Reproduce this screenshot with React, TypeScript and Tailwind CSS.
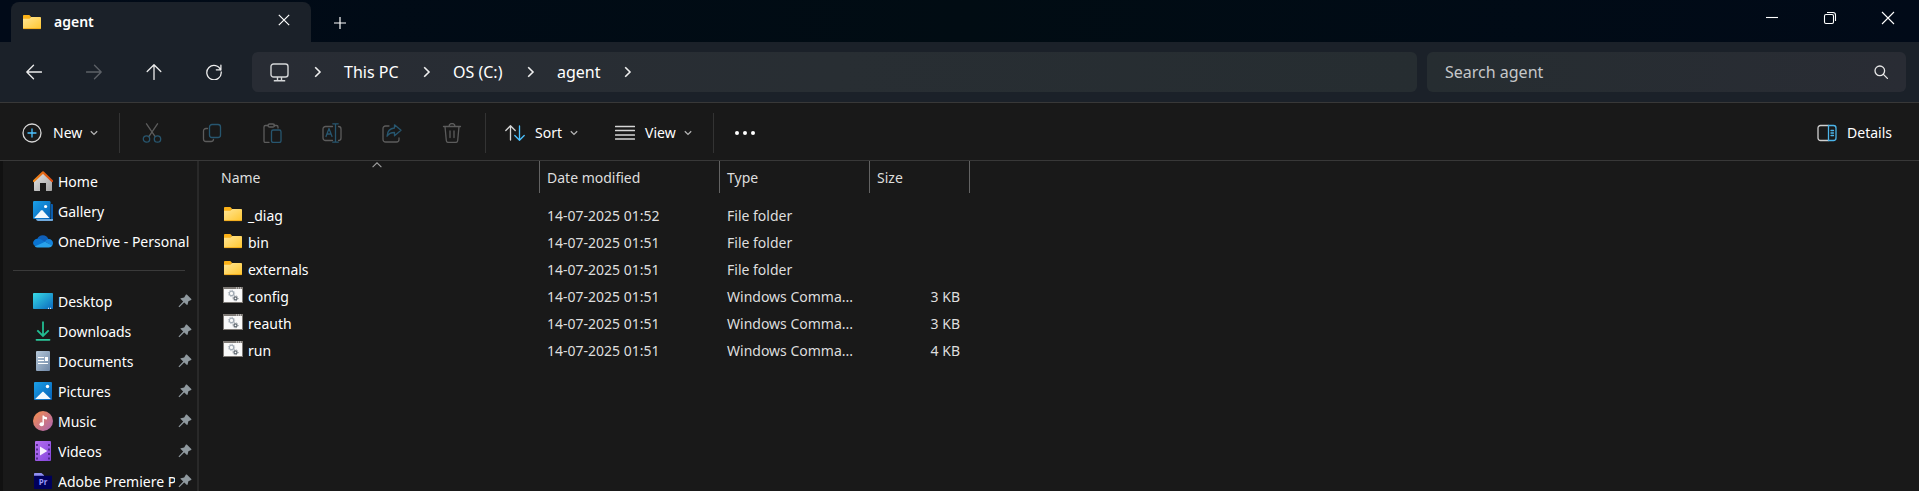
import type { ReactNode } from "react";

type IconProps = { children: ReactNode; size?: number; className?: string };

function Icon({ children, size = 20, className = "" }: IconProps) {
  return (
    <svg
      width={size}
      height={size}
      viewBox="0 0 20 20"
      fill="none"
      stroke="currentColor"
      strokeWidth="1.3"
      strokeLinecap="round"
      strokeLinejoin="round"
      aria-hidden="true"
      className={"shrink-0 " + className}
    >
      {children}
    </svg>
  );
}

function Chevron({ direction }: { direction: "down" | "right" }) {
  return direction === "down" ? (
    <svg width="8" height="6" viewBox="0 0 8 6" fill="none" stroke="#b4b4b4" strokeWidth="1.3" aria-hidden="true">
      <path d="M.8 1.2 4 4.4l3.2-3.2" />
    </svg>
  ) : (
    <svg width="8" height="12" viewBox="0 0 8 12" fill="none" stroke="#f0f0f0" strokeWidth="1.6" aria-hidden="true">
      <path d="M1.2 1.2 6 6l-4.8 4.8" />
    </svg>
  );
}

function FolderIcon() {
  return (
    <svg width="20" height="20" viewBox="0 0 20 20" aria-hidden="true" className="shrink-0">
      <defs>
        <linearGradient id="folder-front" x1="0" y1="0" x2="1" y2="1">
          <stop offset="0" stopColor="#ffe696" />
          <stop offset="1" stopColor="#ffc62f" />
        </linearGradient>
      </defs>
      <path d="M1 3.8c0-.5.3-.8.8-.8h5c.4 0 .7.1 1 .4l1.4 1.5L7.700 7H1z" fill="#fbb117" />
      <path d="M1 6.800h6.300L9.200 5H18.200c.5 0 .8.300.8.800v10.400c0 .5-.3.800-.8.800H1.800c-.5 0-.8-.3-.8-.8z" fill="url(#folder-front)" />
      <path d="M1.300 16.600h17.400" stroke="#f0a818" strokeWidth="0.900" />
    </svg>
  );
}

function Gear({ cx, cy, r, color }: { cx: number; cy: number; r: number; color: string }) {
  return (
    <g stroke={color} fill="none">
      <circle cx={cx} cy={cy} r={r + 1} strokeWidth="0.900" strokeDasharray="1.1 1.4" />
      <circle cx={cx} cy={cy} r={r} strokeWidth="1.200" />
    </g>
  );
}

function ScriptIcon() {
  return (
    <svg width="20" height="20" viewBox="0 0 20 20" aria-hidden="true" className="shrink-0">
      <rect x="0" y="2" width="20" height="16" fill="#7d7975" />
      <rect x="1" y="4" width="18" height="13" fill="#f9f9f9" />
      <path d="M13 3h1M15 3h1M17 3h1" stroke="#e4e4e4" strokeWidth="1" />
      <Gear cx={8.500} cy={8.400} r={2.200} color="#a3acb5" />
      <Gear cx={12.500} cy={13.300} r={1.500} color="#5d666e" />
    </svg>
  );
}

function HomeIcon() {
  return (
    <svg width="20" height="20" viewBox="0 0 20 20" aria-hidden="true" className="shrink-0">
      <defs>
        <linearGradient id="home-wall" x1="0" y1="0" x2="1" y2="1">
          <stop offset="0" stopColor="#e6e6e6" />
          <stop offset="1" stopColor="#a2a2a2" />
        </linearGradient>
        <linearGradient id="home-roof" x1="0" y1="0" x2="1" y2="0">
          <stop offset="0" stopColor="#f08a1c" />
          <stop offset="1" stopColor="#d9480f" />
        </linearGradient>
      </defs>
      <path d="M1 9.500 10 1.500l9 8V19c0 .6-.4 1-1 1h-5v-8H7v8H2c-.6 0-1-.4-1-1z" fill="url(#home-wall)" />
      <path d="M.9 10 10 1.400 19.100 10" fill="none" stroke="url(#home-roof)" strokeWidth="2.200" strokeLinecap="round" strokeLinejoin="round" />
    </svg>
  );
}

function SkyGradient({ id }: { id: string }) {
  return (
    <linearGradient id={id} x1="0" y1="0" x2="1" y2="1">
      <stop offset="0" stopColor="#1ba0e8" />
      <stop offset="1" stopColor="#0560b6" />
    </linearGradient>
  );
}

function GalleryIcon() {
  return (
    <svg width="20" height="20" viewBox="0 0 20 20" aria-hidden="true" className="shrink-0">
      <defs>
        <SkyGradient id="gallery-sky" />
      </defs>
      <path d="M18 3h1.200c.5 0 .8.300.8.800V18h-2z" fill="#0a5cad" />
      <path d="M3 18h17v1c0 .6-.4 1-1 1H5c-1 0-1.700-.7-2-2z" fill="#6fa9dd" />
      <rect x="0" y="0" width="17.500" height="18" rx="1.200" fill="url(#gallery-sky)" />
      <path d="M1.200 17 8 9.600c.5-.5 1.200-.5 1.700 0L16.500 17z" fill="#f2f8fd" />
      <circle cx="12.600" cy="5.500" r="1.600" fill="#fff" />
    </svg>
  );
}

function OneDriveIcon() {
  return (
    <svg width="20" height="20" viewBox="0 0 20 20" aria-hidden="true" className="shrink-0">
      <path d="M4.300 7.900A6 6 0 0 1 15.400 8l-3 4-8 3z" fill="#0f5fb8" />
      <path d="M4.700 7.800c1.300-.1 2.400.2 3.400.8L14 12 3 15.700A4.300 4.300 0 0 1 0 12a4.400 4.400 0 0 1 4.700-4.200z" fill="#0a74d1" />
      <path d="M12 10.800c1-1.900 2.300-2.800 3.600-2.800A4.200 4.200 0 0 1 20 12.300c0 1-.3 1.800-.9 2.500z" fill="#1583dc" />
      <path d="M1.700 15.400 12 10.800l7.300 3.700c-.7 1.300-1.900 2-3.400 2H4.500c-1 0-2-.4-2.800-1.100z" fill="#28a2ec" />
    </svg>
  );
}

function DesktopIcon() {
  return (
    <svg width="20" height="20" viewBox="0 0 20 20" aria-hidden="true" className="shrink-0">
      <defs>
        <linearGradient id="desktop-fill" x1="0" y1="0" x2="1" y2="1">
          <stop offset="0" stopColor="#38dbe6" />
          <stop offset="1" stopColor="#0a67bd" />
        </linearGradient>
      </defs>
      <rect x="0" y="2" width="20" height="16" rx="0.800" fill="url(#desktop-fill)" />
      <path d="M15 17.300h1M17 17.300h1" stroke="#fff" strokeWidth="1" />
    </svg>
  );
}

function DownloadsIcon() {
  return (
    <svg width="20" height="20" viewBox="0 0 20 20" fill="none" aria-hidden="true" className="shrink-0">
      <path d="M10 .5v14M4.300 9.300l5.700 5.700 5.700-5.700" stroke="#22bd92" strokeWidth="1.800" />
      <path d="M3.500 18.800h13" stroke="#2bc79b" strokeWidth="1.800" strokeLinecap="round" />
    </svg>
  );
}

function DocumentsIcon() {
  return (
    <svg width="20" height="20" viewBox="0 0 20 20" aria-hidden="true" className="shrink-0">
      <defs>
        <linearGradient id="document-fill" x1="0" y1="0" x2="1" y2="1">
          <stop offset="0" stopColor="#b5c8d9" />
          <stop offset="1" stopColor="#6f87a6" />
        </linearGradient>
      </defs>
      <rect x="3" y="0" width="14" height="20" rx="1" fill="url(#document-fill)" />
      <path d="M5 6.500h6M5 9.500h6M5 12.500h10" stroke="#fff" strokeWidth="1.200" />
      <rect x="12" y="6" width="3" height="4" fill="#fff" />
    </svg>
  );
}

function PicturesIcon() {
  return (
    <svg width="20" height="20" viewBox="0 0 20 20" aria-hidden="true" className="shrink-0">
      <defs>
        <SkyGradient id="picture-sky" />
      </defs>
      <rect x="1" y="1" width="18" height="18" rx="1" fill="url(#picture-sky)" />
      <path d="M2.200 18 9 11.200c.6-.5 1.300-.5 1.900 0l6.900 6.800z" fill="#f2f8fd" />
      <circle cx="14.500" cy="5.500" r="1.700" fill="#fff" />
    </svg>
  );
}

function MusicIcon() {
  return (
    <svg width="20" height="20" viewBox="0 0 20 20" aria-hidden="true" className="shrink-0">
      <defs>
        <linearGradient id="music-fill" x1="0" y1="0" x2="1" y2="1">
          <stop offset="0.100" stopColor="#f08b54" />
          <stop offset="1" stopColor="#a862b4" />
        </linearGradient>
      </defs>
      <circle cx="10" cy="10" r="10" fill="url(#music-fill)" />
      <ellipse cx="8.700" cy="13.300" rx="2.200" ry="2" fill="#fff" />
      <path d="M9.500 4.500h1.300c.5 1.400 1.600 1.500 3.200 1.700v2.300c-1.300 0-2.300-.2-3.100-.8v5.600H9.500z" fill="#fff" />
    </svg>
  );
}

function VideosIcon() {
  return (
    <svg width="20" height="20" viewBox="0 0 20 20" aria-hidden="true" className="shrink-0">
      <defs>
        <linearGradient id="video-fill" x1="0" y1="0" x2="1" y2="1">
          <stop offset="0" stopColor="#b56ff0" />
          <stop offset="1" stopColor="#8446dc" />
        </linearGradient>
      </defs>
      <rect x="2" y="0" width="16" height="20" rx="1" fill="url(#video-fill)" />
      <path d="M4 3v16M16 3v16" stroke="#44217d" strokeWidth="1.600" strokeDasharray="2 2.500" />
      <path d="M7 5.500v9l7.300-4.500z" fill="#f7f1fd" />
    </svg>
  );
}

function PremiereIcon() {
  return (
    <svg width="20" height="20" viewBox="0 0 20 20" aria-hidden="true" className="shrink-0">
      <path d="M1 5V2.800c0-.5.300-.8.800-.8h6.700L11 4.200V5z" fill="#8f8ff0" />
      <path d="M1 4.800h18V17c0 .6-.4 1-1 1H2c-.6 0-1-.4-1-1z" fill="#00005b" />
      <text x="10" y="14" textAnchor="middle" fontFamily="Open Sans, sans-serif" fontWeight="700" fontSize="8" fill="#9a9aff">
        Pr
      </text>
    </svg>
  );
}

function PinIcon() {
  return (
    <svg width="14" height="14" viewBox="0 0 14 14" fill="#8f999f" aria-hidden="true" className="shrink-0">
      <path d="M8.800.6 13.300 5c.3.300.2.700-.2.900l-2.700 1.300-.8 3.300c-.1.500-.5.600-.9.300L6.200 8.500 1.300 13.200l-.8-.7 4.700-4.900L2.600 5.100c-.4-.4-.2-.8.300-.9l3.300-.7L7.800.8c.2-.4.700-.5 1-.2z" />
    </svg>
  );
}

function Caption({ label, children }: { label: string; children: ReactNode }) {
  return (
    <button type="button" aria-label={label} className="flex h-9 w-[58px] items-center justify-center text-white">
      <svg width="14" height="14" viewBox="0 0 14 14" fill="none" stroke="currentColor" strokeWidth="1.100" aria-hidden="true">
        {children}
      </svg>
    </button>
  );
}

function TitleBar() {
  return (
    <header className="flex h-[42px] shrink-0 justify-between bg-linear-to-r from-[#010a18] via-[#010c13] to-[#010a18]">
      <div className="flex items-end pl-[11px]">
        <div className="flex h-10 w-[300px] items-center rounded-t-lg bg-[#1b2129] pr-4 pl-[11px]">
          <FolderIcon />
          <span className="flex-1 pl-3 text-sm font-semibold text-white">agent</span>
          <button type="button" aria-label="Close tab" className="flex h-[38px] w-[22px] items-center justify-center pb-1 text-white">
            <svg width="12" height="12" viewBox="0 0 12 12" stroke="currentColor" strokeWidth="1.200" aria-hidden="true">
              <path d="m.8.8 10.400 10.400M11.200.8.800 11.200" />
            </svg>
          </button>
        </div>
        <button type="button" aria-label="New tab" className="flex h-[38px] w-[58px] items-center justify-center text-white">
          <svg width="12" height="12" viewBox="0 0 12 12" stroke="currentColor" strokeWidth="1.200" aria-hidden="true">
            <path d="M0 6h12M6 0v12" />
          </svg>
        </button>
      </div>
      <div className="flex pr-[2px]">
        <Caption label="Minimize">
          <path d="M1 6.500h12" />
        </Caption>
        <Caption label="Restore">
          <rect x="1.500" y="3.500" width="9" height="9" rx="1.500" />
          <path d="M4 1.500h6A2.500 2.500 0 0 1 12.500 4v6" />
        </Caption>
        <Caption label="Close">
          <path d="m1 1 12 12M13 1 1 13" />
        </Caption>
      </div>
    </header>
  );
}

function NavButton({ label, disabled, children }: { label: string; disabled?: boolean; children: ReactNode }) {
  return (
    <button
      type="button"
      aria-label={label}
      disabled={disabled}
      className="flex h-10 w-[60px] items-center justify-center text-[#ededed] disabled:text-[#5d6167]"
    >
      <svg width="16" height="16" viewBox="0 0 16 16" fill="none" stroke="currentColor" strokeWidth="1.300" strokeLinecap="round" strokeLinejoin="round" aria-hidden="true">
        {children}
      </svg>
    </button>
  );
}

function AddressBar() {
  return (
    <div className="flex h-[60px] shrink-0 items-center bg-[#1b2129] pr-[13px] pl-1">
      <div className="flex w-[248px]">
        <NavButton label="Back">
          <path d="M15.500 8H.8M7.500 1.200.8 8l6.700 6.800" />
        </NavButton>
        <NavButton label="Forward" disabled>
          <path d="M.5 8h14.700M8.500 1.200 15.200 8l-6.700 6.800" />
        </NavButton>
        <NavButton label="Up">
          <path d="M8 15.500V.8M1.200 7.500 8 .8l6.800 6.700" />
        </NavButton>
        <NavButton label="Refresh">
          <path d="M14.800 6.200A7.200 7.200 0 1 0 15.200 8M14.900 1.200v4.600h-4.600" />
        </NavButton>
      </div>
      <nav aria-label="Address" className="flex h-10 flex-1 items-center rounded-md bg-linear-to-r from-[#282c34] via-[#282e33] to-[#262d31] pl-[18px] text-base text-white">
        <button type="button" aria-label="Locations" className="flex w-11">
          <svg width="19" height="19" viewBox="0 0 19 19" fill="none" stroke="#d4d6d8" strokeWidth="1.400" aria-hidden="true">
            <rect x="1" y="1" width="17" height="13" rx="2.500" />
            <path d="M7.500 14v3M11.500 14v3M3.800 17.800h11.400" />
          </svg>
        </button>
        <Chevron direction="right" />
        <a href="#this-pc" className="w-[78px] pl-[22px] whitespace-nowrap">This PC</a>
        <span className="flex w-[31px] justify-end"><Chevron direction="right" /></span>
        <a href="#c" className="w-[74px] pl-[22px] whitespace-nowrap">OS (C:)</a>
        <span className="flex w-[30px] justify-end"><Chevron direction="right" /></span>
        <a href="#agent" className="w-[67px] pl-[22px] whitespace-nowrap">agent</a>
        <span className="flex w-[30px] justify-end"><Chevron direction="right" /></span>
      </nav>
      <label className="ml-[10px] flex h-10 w-[479px] items-center rounded-md bg-linear-to-r from-[#262d31] to-[#292c34] pr-[18px] pl-[18px]">
        <input
          type="text"
          aria-label="Search agent"
          placeholder="Search agent"
          className="min-w-0 flex-1 bg-transparent text-base text-white outline-none placeholder:text-[#c5c7c9]"
        />
        <svg width="14" height="14" viewBox="0 0 14 14" fill="none" stroke="#e8e8e8" strokeWidth="1.300" strokeLinecap="round" aria-hidden="true">
          <circle cx="5.800" cy="5.800" r="4.800" />
          <path d="m9.400 9.400 4 4" />
        </svg>
      </label>
    </div>
  );
}

function ToolIcon({ label, children }: { label: string; children: ReactNode }) {
  return (
    <button type="button" disabled aria-label={label} className="flex h-10 w-[60px] items-center justify-center text-[#5c5c5c]">
      <Icon>{children}</Icon>
    </button>
  );
}

function Toolbar() {
  return (
    <div role="toolbar" aria-label="Commands" className="flex h-[59px] shrink-0 items-center border-y border-[#383838] bg-[#191919] pt-[3px] text-sm text-white">
      <button type="button" className="flex h-10 w-[119px] items-center pl-[22px]">
        <Icon className="text-[#d6d6d6]">
          <circle cx="10" cy="10" r="9" />
          <path d="M10 6v8M6 10h8" stroke="#4cc2ff" />
        </Icon>
        <span className="w-12 pl-[11px] text-left">New</span>
        <Chevron direction="down" />
      </button>
      <div className="flex h-10 border-x border-[#333] pr-[3px] pl-[2px]">
        <ToolIcon label="Cut">
          <path d="M4.500.800 13 13.300M15.500.800 7 13.300" />
          <circle cx="4.500" cy="16" r="3.200" stroke="#27566f" />
          <circle cx="15.500" cy="16" r="3.200" stroke="#27566f" />
        </ToolIcon>
        <ToolIcon label="Copy">
          <path d="M5.500 5.500H4A2.500 2.500 0 0 0 1.500 8v8A2.500 2.500 0 0 0 4 18.500h5a2.500 2.500 0 0 0 2.500-2.200" />
          <rect x="7.500" y="1.500" width="11" height="13" rx="2.500" stroke="#27566f" />
        </ToolIcon>
        <ToolIcon label="Paste">
          <path d="M6 2.500H3.500A1.500 1.500 0 0 0 2 4v14a1.500 1.500 0 0 0 1.500 1.500H7M12 2.500h2.500A1.500 1.500 0 0 1 16 4v1" />
          <rect x="6" y="1" width="6.500" height="3" rx="1.500" />
          <rect x="9.500" y="7" width="9.500" height="12.500" rx="1.800" stroke="#27566f" />
        </ToolIcon>
        <ToolIcon label="Rename">
          <path d="M10.500 3.500H3.500A2.500 2.500 0 0 0 1 6v9a2.500 2.500 0 0 0 2.500 2.500h7M16.500 3.500A2.500 2.500 0 0 1 19 6v9a2.500 2.500 0 0 1-2.500 2.500" />
          <path d="M10.800.8h5.400M10.800 19.200h5.400M13.500.8v18.400M4 13.500l3-8 3 8M5 11h4" stroke="#27566f" />
        </ToolIcon>
        <ToolIcon label="Share">
          <path d="M7 3H3.500A2.500 2.500 0 0 0 1 5.500v11A2.500 2.500 0 0 0 3.500 19h11a2.500 2.500 0 0 0 2.500-2.500V15" />
          <path d="M12.500 1.800 19 7.300l-6.500 5.500V9.500c-3.500 0-5.800 1-7.500 3.700.3-5 3-7.800 7.500-8.200z" stroke="#27566f" />
        </ToolIcon>
        <ToolIcon label="Delete">
          <path d="M1.500 3.500h17M7 3.500a3 3 0 0 1 6 0M3 3.500l1.300 14A2 2 0 0 0 6.300 19.400h7.400a2 2 0 0 0 2-1.900L17 3.500M8 8v6.500M12 8v6.500" />
        </ToolIcon>
      </div>
      <div className="flex h-10 items-center border-r border-[#333]">
        <button type="button" className="flex h-10 w-[110px] items-center pl-[19px]">
          <Icon className="text-[#d6d6d6]">
            <path d="M5.500 17V3M.8 7.500 5.500 2.700l4.700 4.800" />
            <path d="M14.500 3v14M9.800 12.500l4.700 4.800 4.700-4.800" stroke="#4cc2ff" />
          </Icon>
          <span className="w-[45px] pl-[10px] text-left">Sort</span>
          <Chevron direction="down" />
        </button>
        <button type="button" className="flex h-10 w-[117px] items-center pl-[19px]">
          <Icon className="text-[#d6d6d6]">
            <path d="M.5 3.500h19M.5 7.500h19M.5 12h19M.5 16h19" />
          </Icon>
          <span className="w-[49px] pl-[10px] text-left">View</span>
          <Chevron direction="down" />
        </button>
      </div>
      <button type="button" aria-label="See more" className="flex h-10 w-[62px] items-center justify-center">
        <svg width="22" height="4" viewBox="0 0 22 4" fill="#fff" aria-hidden="true">
          <circle cx="3" cy="2" r="2" />
          <circle cx="11" cy="2" r="2" />
          <circle cx="19" cy="2" r="2" />
        </svg>
      </button>
      <button type="button" className="mr-[27px] ml-auto flex h-10 items-center gap-[10px]">
        <Icon className="text-[#cfcfcf]">
          <path d="M11.500 2.500H3.500A2.500 2.500 0 0 0 1 5v10a2.500 2.500 0 0 0 2.500 2.500h8" />
          <path d="M11.500 2.500h5A2.500 2.500 0 0 1 19 5v10a2.500 2.500 0 0 1-2.500 2.500h-5zM14 7.500h2.500M14 10h2.500M14 12.500h2.500" stroke="#4cb5ea" />
        </Icon>
        Details
      </button>
    </div>
  );
}

type Place = { name: string; icon: ReactNode; pinned?: boolean };

const topPlaces: Place[] = [
  { name: "Home", icon: <HomeIcon /> },
  { name: "Gallery", icon: <GalleryIcon /> },
  { name: "OneDrive - Personal", icon: <OneDriveIcon /> },
];

const pinnedPlaces: Place[] = [
  { name: "Desktop", icon: <DesktopIcon />, pinned: true },
  { name: "Downloads", icon: <DownloadsIcon />, pinned: true },
  { name: "Documents", icon: <DocumentsIcon />, pinned: true },
  { name: "Pictures", icon: <PicturesIcon />, pinned: true },
  { name: "Music", icon: <MusicIcon />, pinned: true },
  { name: "Videos", icon: <VideosIcon />, pinned: true },
  { name: "Adobe Premiere Pro", icon: <PremiereIcon />, pinned: true },
];

function PlaceList({ places }: { places: Place[] }) {
  return (
    <ul>
      {places.map((place) => (
        <li key={place.name}>
          <a href={"#" + place.name} className="flex h-[30px] items-center pr-[5px] pl-[30px]">
            {place.icon}
            <span className="ml-[5px] min-w-0 flex-1 overflow-hidden pt-px whitespace-nowrap">{place.name}</span>
            {place.pinned && (
              <span className="ml-[3px] flex">
                <PinIcon />
              </span>
            )}
          </a>
        </li>
      ))}
    </ul>
  );
}

function Sidebar() {
  return (
    <nav aria-label="Places" className="w-[199px] shrink-0 overflow-hidden border-r-2 border-l-3 border-r-[#292929] border-l-[#111111] bg-[#191919] pt-[5px] text-sm text-white">
      <PlaceList places={topPlaces} />
      <hr className="mt-[14px] mr-3 mb-[15px] ml-[10px] border-[#3a3a3a]" />
      <PlaceList places={pinnedPlaces} />
    </nav>
  );
}

type Entry = { name: string; modified: string; type: string; size: string };

const entries: Entry[] = [
  { name: "_diag", modified: "14-07-2025 01:52", type: "File folder", size: "" },
  { name: "bin", modified: "14-07-2025 01:51", type: "File folder", size: "" },
  { name: "externals", modified: "14-07-2025 01:51", type: "File folder", size: "" },
  { name: "config", modified: "14-07-2025 01:51", type: "Windows Comma...", size: "3 KB" },
  { name: "reauth", modified: "14-07-2025 01:51", type: "Windows Comma...", size: "3 KB" },
  { name: "run", modified: "14-07-2025 01:51", type: "Windows Comma...", size: "4 KB" },
];

function FileList() {
  return (
    <main className="min-w-0 flex-1 overflow-hidden">
      <table className="table-fixed border-separate border-spacing-0 text-sm text-[#dedede]">
        <colgroup>
          <col className="w-[341px]" />
          <col className="w-[180px]" />
          <col className="w-[150px]" />
          <col className="w-[100px]" />
        </colgroup>
        <thead>
          <tr className="h-8 text-left">
            <th scope="col" aria-sort="ascending" className="relative border-r border-[#636363] p-0 pt-px pl-[22px] font-normal">
              <svg width="10" height="6" viewBox="0 0 10 6" fill="none" stroke="#a0a0a0" strokeWidth="1.100" aria-hidden="true" className="absolute top-px left-[173px]">
                <path d="M.6 5.200 5 .8l4.400 4.400" />
              </svg>
              Name
            </th>
            <th scope="col" className="border-r border-[#636363] p-0 pt-px pl-[7px] font-normal">Date modified</th>
            <th scope="col" className="border-r border-[#636363] p-0 pt-px pl-[7px] font-normal">Type</th>
            <th scope="col" className="border-r border-[#636363] p-0 pt-px pl-[7px] font-normal">Size</th>
          </tr>
        </thead>
        <tbody className="before:block before:h-[9px]">
          {entries.map((entry) => (
            <tr key={entry.name} className="h-[27px]">
              <td className="p-0 pl-6 text-white">
                <span className="flex items-center gap-[5px]">
                  <span className="flex pb-[3px]">{entry.size ? <ScriptIcon /> : <FolderIcon />}</span>
                  {entry.name}
                </span>
              </td>
              <td className="p-0 pl-[7px] whitespace-nowrap">{entry.modified}</td>
              <td className="p-0 pl-[7px] whitespace-nowrap">{entry.type}</td>
              <td className="p-0 pr-[10px] text-right whitespace-nowrap">{entry.size}</td>
            </tr>
          ))}
        </tbody>
      </table>
    </main>
  );
}

export default function App() {
  return (
    <div className="flex h-screen flex-col overflow-hidden bg-[#191919] font-['Noto_Sans','Open_Sans',sans-serif]">
      <TitleBar />
      <AddressBar />
      <Toolbar />
      <div className="flex min-h-0 flex-1">
        <Sidebar />
        <FileList />
      </div>
    </div>
  );
}
